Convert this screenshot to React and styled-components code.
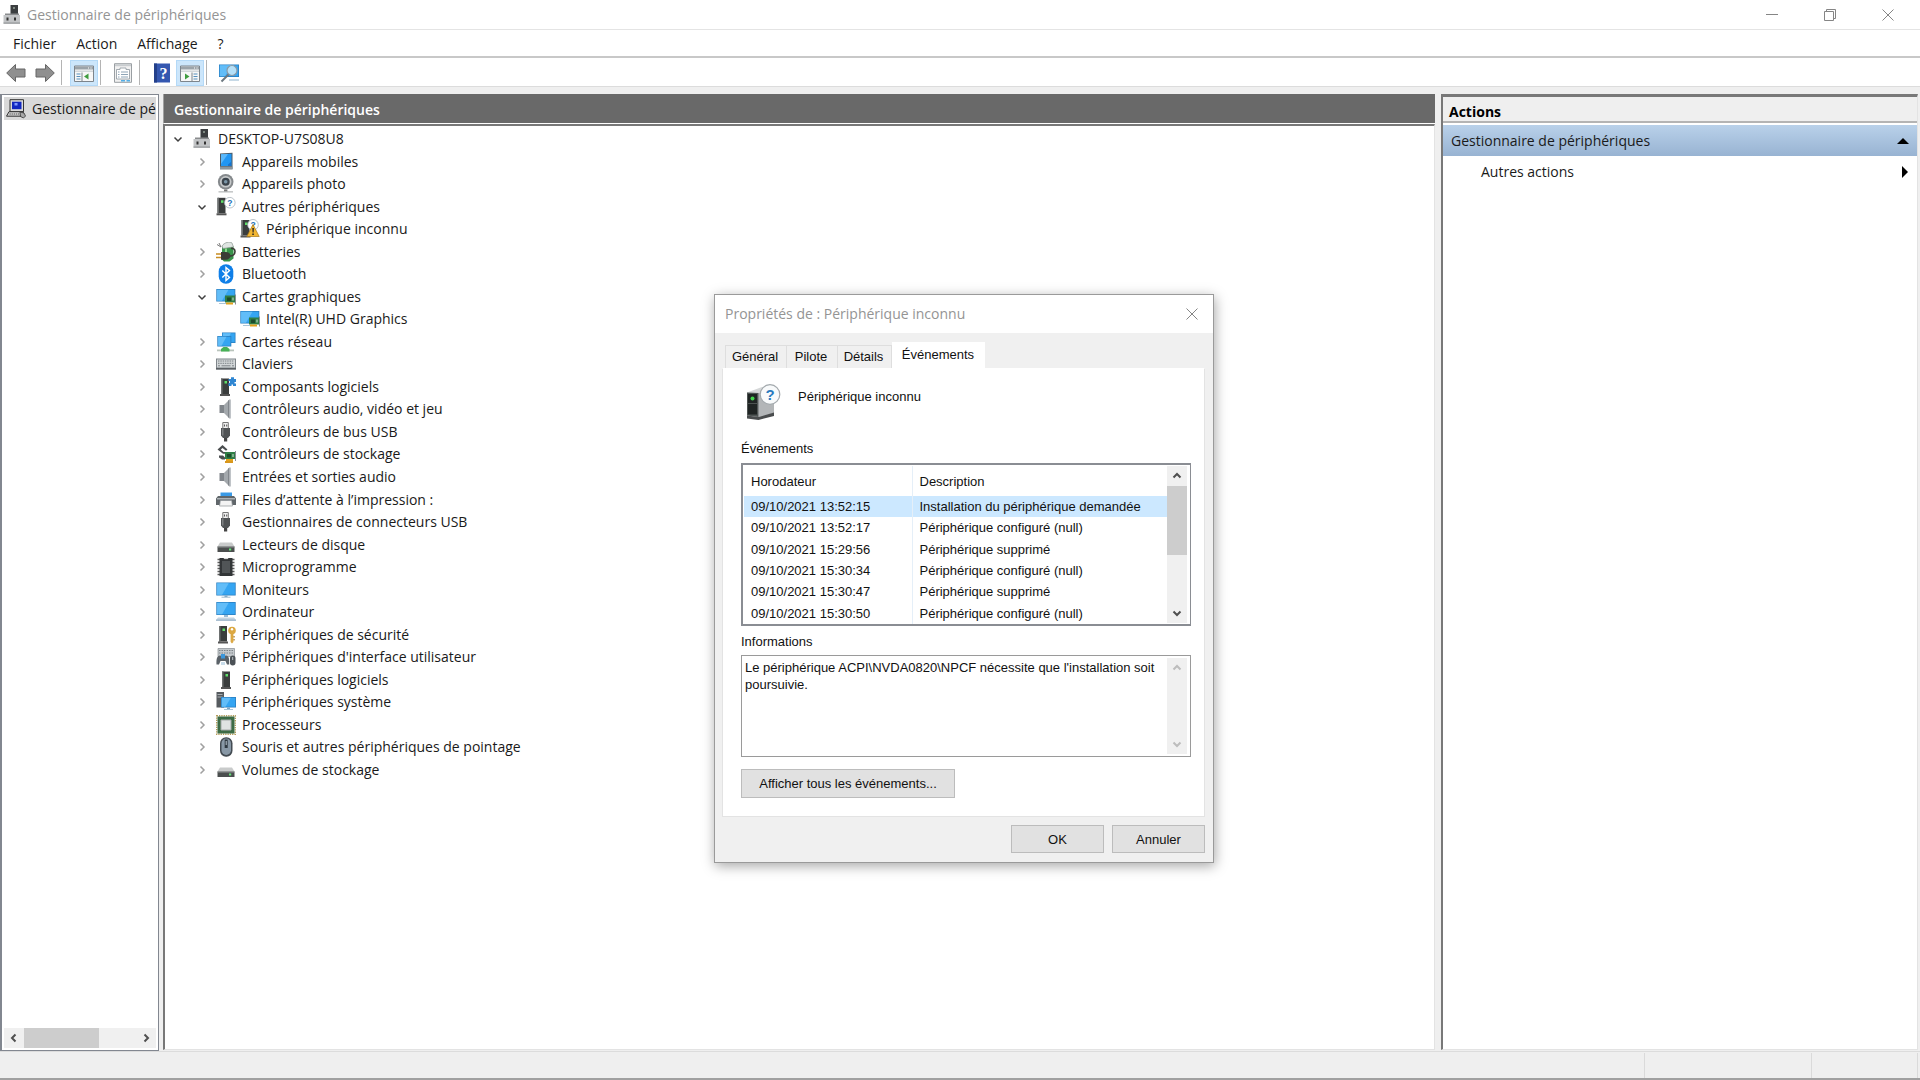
import React, { useState } from 'react'
import styled, { createGlobalStyle } from 'styled-components';

const GlobalStyle = createGlobalStyle`
* {
    box-sizing: border-box;
}
body {
    margin: 0;
    font-family: "Open Sans", "Noto Sans", sans-serif;
    font-size: 14px;
    line-height: 20px;
    color: #1a1a1a;
    background: #efefef;
}
button, textarea, table {
    font: inherit;
    color: inherit;
}
button {
    padding: 0;
    border: 0;
    background: none;
}
`;

/* ---------- main window ---------- */
const WindowStyle = styled.div`
    display: flex;
    flex-direction: column;
    min-height: 100vh;
    border-bottom: 2px solid #a0a0a0;
`;
const TitleBar = styled.header`
    display: flex;
    align-items: center;
    height: 30px;
    padding-left: 2px;
    background: #fff;
    border-bottom: 1px solid #e4e4e4;
`;
const TitleText = styled.h1`
    flex: 1;
    margin: 0 0 0 5px;
    font-size: 14px;
    font-weight: 400;
    color: #949494;
`;
const CaptionButton = styled.button`
    display: flex;
    align-items: center;
    justify-content: center;
    width: 58px;
    height: 28px;
`;
const CaptionGroup = styled.div`
    display: flex;
    padding-right: 3px;
`;
const MenuBar = styled.nav`
    display: flex;
    height: 28px;
    padding: 1px 3px 0;
    background: #fff;
    border-bottom: 2px solid #c8c8c8;
`;
const MenuButton = styled.button`
    padding: 0 10px;
`;
const ToolBar = styled.div`
    display: flex;
    align-items: center;
    height: 29px;
    padding: 1px 0 0 2px;
    background: #fff;
    border-bottom: 1px solid #dcdcdc;
`;
const ToolButton = styled.button`
    display: flex;
    align-items: center;
    justify-content: center;
    width: 28px;
    height: 26px;
    margin-left: ${props => props.$gap ? 1 : 0}px;
    background: ${props => props.$active ? '#cce6fb' : 'transparent'};
    border: 1px solid ${props => props.$active ? '#b4d9f7' : 'transparent'};
`;
const ToolSeparator = styled.span`
    width: 1px;
    height: 25px;
    margin: 0 8px 0 2px;
    background: #b4b4b4;
`;
const Workspace = styled.main`
    display: flex;
    flex: 1;
    padding: 7px 2px 0 0;
`;

/* ---------- left pane ---------- */
const ConsolePane = styled.aside`
    display: flex;
    flex-direction: column;
    width: 159px;
    margin-right: 4px;
    padding: 2px;
    background: #fff;
    border: 1px solid #828790;
    border-left-width: 2px;
`;
const ConsoleItem = styled.button`
    display: flex;
    align-items: center;
    gap: 6px;
    height: 23px;
    padding-left: 2px;
    background: #d9d9d9;
    overflow: hidden;
    white-space: nowrap;
`;

/* ---------- scroll bars ---------- */
const ScrollTrack = styled.div`
    display: flex;
    flex-direction: ${props => props.$vertical ? 'column' : 'row'};
    flex: none;
    ${props => props.$vertical ? 'width: 20px;' : 'height: 20px; margin-top: auto;'}
    background: #f0f0f0;
`;
const ScrollButton = styled.button`
    display: flex;
    align-items: center;
    justify-content: center;
    width: 20px;
    height: 20px;
    color: ${props => props.disabled ? '#bdbdbd' : '#505050'};
`;
const ScrollThumb = styled.span`
    ${props => props.$vertical ? 'height: 69px;' : 'width: 75px;'}
    background: #cdcdcd;
`;
const ScrollSpace = styled.span`
    flex: 1;
`;

/* ---------- middle pane ---------- */
const DevicePane = styled.section`
    display: flex;
    flex-direction: column;
    flex: 1;
    min-width: 0;
    margin-right: 6px;
`;
const PaneTitle = styled.h2`
    height: 30px;
    margin: 0;
    padding-left: 10px;
    font-size: 14px;
    line-height: 32px;
    font-weight: 600;
    color: #fff;
    background: #696969;
    border-left: 1px solid #a0a0a0;
    border-bottom: 1px solid #fff;
`;
const DeviceBox = styled.div`
    flex: 1;
    margin-bottom: 1px;
    padding: 2px 0 0 5px;
    background: #fff;
    border: 2px solid #787878;
    border-right: 1px solid #e3e3e3;
    border-bottom: 1px solid #e3e3e3;
`;
const Tree = styled.ul`
    display: grid;
    grid-auto-rows: 1fr;
    height: 653px;
    margin: 0;
    padding: 0;
    list-style: none;
`;
const TreeRow = styled.li`
    display: flex;
    align-items: center;
    padding-left: ${props => props.$level * 24}px;
`;
const Expander = styled.button`
    display: flex;
    align-items: center;
    justify-content: center;
    width: 16px;
    height: 16px;
    margin-right: 6px;
    visibility: ${props => props.$hidden ? 'hidden' : 'visible'};
    color: ${props => props.$open ? '#404040' : '#a0a0a0'};
`;
const TreeLabel = styled.span`
    margin-left: 6px;
    white-space: nowrap;
`;

/* ---------- right pane ---------- */
const ActionsPane = styled.aside`
    display: flex;
    flex-direction: column;
    width: 477px;
    margin-bottom: 1px;
    background: #fff;
    border: 2px solid #787878;
    border-top-width: 3px;
    border-right: 1px solid #e3e3e3;
    border-bottom: 1px solid #e3e3e3;
`;
const ActionsTitle = styled.h2`
    height: 26px;
    margin: 0 0 2px;
    padding-left: 6px;
    font-size: 14px;
    line-height: 29px;
    font-weight: 700;
    color: #000;
    background: #efefef;
    border-bottom: 2px solid #b4b4b4;
`;
const ActionButton = styled.button`
    display: flex;
    align-items: center;
    justify-content: space-between;
    height: 31px;
    padding: ${props => props.$group ? '0 8px' : '0 9px 0 38px'};
    background: ${props => props.$group ? 'linear-gradient(#b9d1ea, #98b3d2)' : 'none'};
`;
const StatusBar = styled.footer`
    display: flex;
    justify-content: flex-end;
    height: 27px;
    padding: 1px 2px 0 0;
    border-top: 1px solid #dcdcdc;
`;
const StatusCell = styled.span`
    width: ${props => props.$width}px;
    border-left: 1px solid #dadada;
`;

/* ---------- properties dialog ---------- */
const Dialog = styled.section`
    position: absolute;
    left: 714px;
    top: 294px;
    width: 500px;
    font-family: "Liberation Sans", Arial, sans-serif;
    font-size: 13px;
    line-height: 17px;
    color: #111;
    background: #f0f0f0;
    border: 1px solid #9a9a9a;
    box-shadow: 1px 3px 12px rgba(0, 0, 0, 0.35);
`;
const DialogTitle = styled.header`
    display: flex;
    align-items: center;
    justify-content: space-between;
    height: 38px;
    padding: 0 0 1px 10px;
    font-family: "Open Sans", "Noto Sans", sans-serif;
    color: #949494;
    background: #fff;
`;
const DialogHeading = styled.h2`
    margin: 0;
    font-size: 14px;
    font-weight: 400;
`;
const DialogClose = styled(CaptionButton)`
    width: 42px;
`;
const TabList = styled.div`
    display: flex;
    align-items: flex-end;
    padding: 9px 0 0 10px;
`;
const Tab = styled.button`
    width: ${props => props.$width}px;
    height: ${props => props.$selected ? 26 : 23}px;
    padding: 0 ${props => props.$selected ? '0 3px' : '2px 2px 0'};
    background: ${props => props.$selected ? '#fff' : '#f0f0f0'};
    border: 1px solid ${props => props.$selected ? '#fff' : '#dedede'};
    border-bottom: 0;
    border-left-width: ${props => props.$first ? 1 : 0}px;
`;
const TabPanel = styled.div`
    display: flex;
    flex-direction: column;
    height: 449px;
    margin: 0 8px 0 7px;
    padding: 15px 13px 17px 18px;
    background: #fff;
    border: 1px solid #e3e3e3;
    border-top-color: #fff;
`;
const DeviceHeader = styled.div`
    display: flex;
    gap: 16px;
    height: 56px;
    padding-left: 5px;
`;
const DeviceName = styled.span`
    padding-top: 4px;
`;
const FieldLabel = styled.label`
    display: block;
    margin-bottom: ${props => props.$below}px;
`;
const EventBox = styled.div`
    display: flex;
    height: 163px;
    margin-bottom: 7px;
    padding: 1px 3px 1px 1px;
    border: 2px solid #8a8d93;
    border-right-width: 1px;
`;
const EventTable = styled.table`
    flex: 1;
    height: 158px;
    border-collapse: collapse;
    text-align: left;
`;
const EventHead = styled.th`
    width: ${props => props.$width};
    height: 30px;
    padding: 0 0 0 7px;
    font-weight: 400;
    border-right: 1px solid #e5eff8;
    &:last-child {
        border-right: 0;
    }
`;
const EventRow = styled.tr`
    background: ${props => props.$selected ? '#cce8ff' : 'transparent'};
`;
const EventCell = styled.td`
    padding: 0 0 0 7px;
    white-space: nowrap;
    border-right: 1px solid #e5eff8;
    &:last-child {
        border-right: 0;
    }
`;
const InfoBox = styled.div`
    display: flex;
    height: 102px;
    margin-bottom: 12px;
    padding: 2px 3px 2px 2px;
    border: 1px solid #9a9a9a;
`;
const InfoText = styled.textarea`
    flex: 1;
    min-width: 0;
    padding: 1px 0 0 1px;
    border: 0;
    outline: none;
    resize: none;
    overflow: hidden;
`;
const DialogButton = styled.button`
    width: ${props => props.$wide ? 214 : 93}px;
    height: ${props => props.$wide ? 29 : 28}px;
    background: #e1e1e1;
    border: 1px solid #bcbcbc;
`;
const DialogFooter = styled.footer`
    display: flex;
    justify-content: flex-end;
    gap: 8px;
    padding: 8px 8px 9px 0;
`;

/* ---------- icons ---------- */
const Drawing = styled.svg`
    flex: none;
`;
const Svg = ({ size = 20, box = 20, children }) => (
    <Drawing width={size} height={size} viewBox={`0 0 ${box} ${box}`} fill="none" aria-hidden="true">{children}</Drawing>
)

const chevrons = {
    up: 'M1.5 6.5 5 3l3.5 3.5',
    down: 'M1.5 3.5 5 7l3.5-3.5',
    left: 'M6.5 1.5 3 5l3.5 3.5',
    right: 'M3.5 1.5 7 5 3.5 8.5',
}
const Chevron = ({ to, width = 1.5 }) => (
    <Svg size={10} box={10}><path d={chevrons[to]} stroke="currentColor" strokeWidth={width} /></Svg>
)

const Tower = ({ x = 0, y = 0 }) => (
    <g transform={`translate(${x} ${y})`}>
        <path d="M1 .5h8V16H1z" fill="#3a3d3d" />
        <path d="M1 .5h1.500V16H1z" fill="#6d7070" />
        <path d="M0 16h10v2H0z" fill="#555" />
        <path d="M4.500 3h2.500v2.500H4.500z" fill="#5fe06a" />
    </g>
)
const Screen = ({ x, y, w, h }) => (
    <g>
        <rect x={x} y={y} width={w} height={h} fill="#2b7fc0" />
        <rect x={x + 0.8} y={y + 0.8} width={w - 1.6} height={h - 1.6} fill="#35a5f2" />
        <path d={`M${x + 0.8} ${y + 0.8}h${w * 0.6}L${x + w * 0.3} ${y + h - 0.8}H${x + 0.8}z`} fill="#62bdf8" />
    </g>
)
const Card = ({ x, y }) => (
    <g transform={`translate(${x} ${y})`}>
        <path d="M1 1h10v7H1z" fill="#2f7d46" />
        <path d="M3 3h4v3.500H3z" fill="#1d4c2c" />
        <path d="M8 3h2v3H8z" fill="#7fb08c" />
        <path d="M2 8h7v2H2z" fill="#e3a21c" />
        <path d="M11 0h1v10h-1z" fill="#8a8f94" />
    </g>
)
const Bubble = ({ x, y }) => (
    <g>
        <circle cx={x} cy={y} r="5.300" fill="#fff" stroke="#a9b4bd" strokeWidth=".8" />
        <text x={x} y={y + 3} textAnchor="middle" fontSize="8.500" fontWeight="700" fontFamily="Liberation Sans" fill="#2470b8">?</text>
    </g>
)
const UsbPlug = () => (
    <g>
        <path d="M6.800 .5h5.500v6H6.800z" fill="#f0f0f0" stroke="#777" />
        <path d="M8 2.500h1v2H8zM10.200 2.500h1v2h-1z" fill="#555" />
        <path d="M5 6h9v7.500l-2 2.500H7l-2-2.500z" fill="#505355" />
        <path d="M6 6.500h1.500v7H6z" fill="#7d8082" />
        <path d="M8 16h3.200v3.500H8z" fill="#444" />
    </g>
)
const Speaker = () => (
    <g>
        <path d="M3.500 6h4.500v8H3.500z" fill="#80858a" />
        <path d="M8 6 13.500.5v19L8 14z" fill="#a3a8ac" />
        <path d="M12.500 1.500 13.500.5v19l-1-1z" fill="#62676c" />
        <path d="M13.500.5h1.500v19h-1.500z" fill="#c0c4c8" />
    </g>
)
const Drive = () => (
    <g>
        <path d="M4 7.500h12l2.500 4H1.500z" fill="#c9cbcb" />
        <path d="M1.500 11.500h17V17h-17z" fill="#4b4e4e" />
        <path d="M1.500 11.500h17v1h-17z" fill="#8d9090" />
        <path d="M13 13.500h2.200v2H13z" fill="#67e27b" />
    </g>
)

const icons = {
    computer: (
        <g>
            <path d="M8.500 0H16v10H8.500z" fill="#3b3e40" />
            <path d="M11 2h2v2h-2z" fill="#7f8a82" />
            <path d="M3 8.500h14v2H3z" fill="#8a8c8e" />
            <path d="M1.500 10h16.500v8.500H1.500z" fill="#c2c4c6" />
            <path d="M1.500 17.500h16.500v1.200H1.500z" fill="#919496" />
            <path d="M4.500 12.500h2v3h-2zM12 12.500h2v3h-2z" fill="#333" />
        </g>
    ),
    mobile: (
        <g>
            <path d="m4 1.500 12.500-.8v16.600H4z" fill="#4c5963" />
            <path d="m5 2.300 10.500-.6V14H5z" fill="#2196f3" />
            <path d="m5 2.300 7-.4L5 12z" fill="#5bb8fa" />
            <path d="M4 14.500h12.500v2.800H4z" fill="#8c969d" />
            <path d="M12 12.500 15 10v4h-3z" fill="#1674cf" />
        </g>
    ),
    camera: (
        <g>
            <circle cx="9.700" cy="7.800" r="7.800" fill="#85898c" />
            <circle cx="9.700" cy="7.800" r="5.800" fill="#c6c9ca" />
            <circle cx="9.700" cy="7.800" r="4" fill="#3b444c" />
            <circle cx="9.700" cy="7.800" r="1.800" fill="#7b96a8" />
            <path d="M8 15.500h3.400V18H8z" fill="#777" />
            <path d="M2.500 17.200h14.500v1.300H2.500z" fill="#b9bcbd" />
        </g>
    ),
    other: (
        <g><Tower x={0.5} y={0.3} /><Bubble x={13.8} y={5.7} /></g>
    ),
    unknown: (
        <g>
            <Tower x={0.5} y={0.5} />
            <Bubble x={13} y={5.8} />
            <path d="M13 5.500 19.200 17.500H6.800z" fill="#f2b632" stroke="#a8791a" strokeWidth=".7" />
            <path d="M12.300 9h1.600l-.3 4.600h-1zM12.300 14.500h1.500V16h-1.500z" fill="#222" />
        </g>
    ),
    battery: (
        <g>
            <path d="M6 4.500h11.500v12l-4 3H8l-2-2z" fill="#38934a" />
            <path d="M6 4C8 .5 14-1 16 1l1.500 4L7 6.500z" fill="#dfe5e2" stroke="#8b9690" strokeWidth=".7" />
            <path d="M9 6.500h2v4H9z" fill="#8bd68d" />
            <path d="M0 12h6M0 15.500h6" stroke="#c78d23" strokeWidth="1.500" />
            <path d="M5 10h4.500c3 0 5 1.700 5 3.700s-2 4-5 4H5z" fill="#3b3b36" />
            <path d="M14 14c3 0 5-2 5-4.500s-2-3.500-4-3" stroke="#3b3b36" strokeWidth="1.600" />
            <path d="M1 2.500 5 5M3 1l2 4" stroke="#777" />
        </g>
    ),
    bluetooth: (
        <g>
            <rect x="2.700" y=".2" width="14.600" height="19.600" rx="7.300" fill="#0f7fe8" />
            <path d="m6.300 6.500 7.200 7-3.500 3V3.500l3.500 3-7.200 7" stroke="#fff" strokeWidth="1.400" />
        </g>
    ),
    graphics: (
        <g>
            <Screen x={0.3} y={2} w={19} h={12.500} />
            <Card x={8} y={7.500} />
            <path d="M3 16h7v1H3z" fill="#a9c4d8" />
        </g>
    ),
    network: (
        <g>
            <Screen x={6} y={0.500} w={13.500} h={10.500} />
            <Screen x={1.300} y={4} w={14} h={10.500} />
            <path d="M1 17.500h17v1.800H1z" fill="#b9c4bc" />
            <path d="M5 19.500v-2.500L7.500 15H11l2.500 2v2.500z" fill="#46b156" />
        </g>
    ),
    keyboard: (
        <g>
            <path d="M0 4.500h20v11H0z" fill="#7f858a" />
            <path d="M1 5.500h18v8H1z" fill="#d3d7d9" />
            <path d="M2 7h16M2 9.300h16" stroke="#7c8286" strokeDasharray="1.500 .8" />
            <path d="M2 11.800h2M5.500 11.800h9M16 11.800h2" stroke="#7c8286" />
            <path d="M0 14h20v1.500H0z" fill="#5c6165" />
        </g>
    ),
    component: (
        <g>
            <Tower x={4} y={1} />
            <path d="M12.500 2H15V.3h3V2h2v3h-1.500v1.500H20V9h-3V7.500h-1.500V9h-3V6h1.300V4h-1.300z" fill="#2f86d2" />
        </g>
    ),
    audio: <Speaker />,
    usb: <UsbPlug />,
    storage: (
        <g>
            <path d="m1.500 5.500 5-4.500 5 4.500-1.500 1.300L6.500 4 4.800 5.500 7.500 8H10v1.800H7z" fill="#4a4d4f" />
            <path d="M3 11.500h4l2 2v2H6l-3-2z" fill="#4a4d4f" />
            <Card x={8} y={7} />
            <path d="M9 17h8v2H9z" fill="#d8971d" />
        </g>
    ),
    printer: (
        <g>
            <path d="M4.500 2.500h11.500v4H4.500z" fill="#3a9ae6" />
            <path d="M2 6h16l2 2.500V15h-4v-4H4v4H0V8.500z" fill="#60666a" />
            <path d="M1 8h18v1.500H1z" fill="#adb3b7" />
            <path d="M4.500 10.500h11l1 5.500h-13z" fill="#f4f4f4" stroke="#8c9296" strokeWidth=".7" />
        </g>
    ),
    drive: <Drive />,
    chip: (
        <g>
            <path d="M1.500 2.500h17M1.500 5.500h17M1.500 8.500h17M1.500 11.500h17M1.500 14.500h17M1.500 17.500h17" stroke="#5d5d5d" strokeWidth="1.300" />
            <path d="M3.500 1h4l1 1.500h3l1-1.500h4v18h-13z" fill="#333638" />
            <path d="M6 4h8v12H6z" fill="#515557" />
        </g>
    ),
    monitor: (
        <g>
            <Screen x={0.3} y={2.500} w={19.400} h={13} />
            <path d="M8.500 15.500h3V17h-3z" fill="#7da7c6" />
            <path d="M5.500 16.700h9v1h-9z" fill="#9db8cc" />
        </g>
    ),
    desktop: (
        <g>
            <Screen x={0.3} y={0} w={19.400} h={13} />
            <path d="M8 13h4v2H8z" fill="#9dbdd6" />
            <path d="M2 15.500h16l2 2.500H0z" fill="#c3d4e2" />
            <path d="M0 17.700h20v1H0z" fill="#86a5bf" />
        </g>
    ),
    security: (
        <g>
            <Tower x={2} y={0.500} />
            <circle cx="16" cy="5.500" r="3.800" fill="#dca842" />
            <circle cx="16" cy="4.200" r="1.200" fill="#fff" />
            <path d="M14.600 8.500h2.800V17L16 18.500 14.600 17z" fill="#dca842" />
            <path d="M17.400 11h1.300v1.500h-1.300zM17.400 14h1.300v1.500h-1.300z" fill="#b3812a" />
        </g>
    ),
    hid: (
        <g>
            <path d="M2 1.500h16.500v8H2z" fill="#c4c9cd" stroke="#868c91" strokeWidth=".7" />
            <path d="M3 3.500h14M3 6h14" stroke="#7c8286" strokeDasharray="1.500 1" />
            <path d="M.5 17.500C.2 12 1 8.500 4 8.500c1.500 0 2 1 3 1s1.500-1 3-1c3 0 3.500 3.500 3.200 9H11L9.500 14h-5L3 17.500z" fill="#5b6268" />
            <path d="M5 7h4v4.500H5z" fill="#3c97db" />
            <path d="M5 15h4v3H5z" fill="#c8dcea" />
            <rect x="14" y="8.500" width="5.500" height="10" rx="2.700" fill="#4b5156" />
            <path d="M16.700 10v3" stroke="#b9c0c5" />
        </g>
    ),
    software: <Tower x={5} y={1} />,
    system: (
        <g>
            <path d="M.5 0h7.500v15.500H.5z" fill="#565b5f" />
            <path d="M1.500 2.500h5M1.500 5h5" stroke="#a8adb1" />
            <Screen x={5} y={5} w={15} h={10.500} />
            <path d="M11 15.500h3v2h-3z" fill="#7da7c6" />
            <path d="M8 17h9v1H8z" fill="#a9c4d8" />
        </g>
    ),
    cpu: (
        <g>
            <path d="M.7.700h18.600v18.600H.7z" stroke="#b39c59" strokeWidth="1.400" strokeDasharray="1.300 1" />
            <path d="M1.500 1.500h17v17h-17z" fill="#3c6b45" />
            <path d="M5 5h10v10H5z" fill="#dfe2e2" stroke="#a6aaaa" />
        </g>
    ),
    mouse: (
        <g>
            <rect x="4" y=".2" width="12.500" height="19.600" rx="6" fill="#434b52" />
            <rect x="5.500" y="1.500" width="9.500" height="16.500" rx="4.700" fill="#8898a6" />
            <path d="M8.700 2.500h3v8.500h-3z" fill="#303a42" />
            <path d="M10.200 4v4" stroke="#b7c4cf" />
        </g>
    ),
    console: (
        <g>
            <path d="M4 .7h13.500v12H4z" fill="#dadada" stroke="#333" />
            <path d="M6 2.700h9.500v7.500H6z" fill="#1026c0" />
            <path d="M8.500 4h3v2.500h-3z" fill="#7d96ff" />
            <path d="m3 12.700-2.500 4.500h15.500l1.500-4.500z" fill="#d0d0d0" stroke="#333" />
            <path d="M3.500 15h10" stroke="#555" strokeDasharray="1.300 .8" />
            <path d="m14 13 4 1 1.500 3-2 2-3-1.500z" fill="#a8a8a8" stroke="#333" strokeWidth=".8" />
        </g>
    ),
    back: <path d="M9.500 1.500.7 10l8.800 8.500V14H19V6H9.500z" fill="#8f8f8f" stroke="#666" />,
    forward: <path d="M10.500 1.500 19.300 10l-8.800 8.500V14H1V6h9.500z" fill="#8f8f8f" stroke="#666" />,
    treePane: (
        <g>
            <path d="M.5 3h19v15.500H.5z" fill="#f7f7f7" stroke="#7d858c" />
            <path d="M1 3.500h18v3H1z" fill="#9ba3a9" />
            <path d="M14 5h1M16.500 5h1" stroke="#fff" />
            <path d="M1 7.500h18V9H1z" fill="#d2d7db" />
            <path d="M2.500 11h4M2.500 13.500h4M2.500 16h4" stroke="#5790bd" strokeWidth="1.200" />
            <path d="M8 9.500v9" stroke="#7d858c" />
            <path d="M14.500 10.500v6l-4.500-3z" fill="#3f9c3f" />
        </g>
    ),
    properties: (
        <g>
            <path d="M1.500.7h17v18.600h-17z" fill="#f1f1f1" stroke="#9a9fa3" />
            <path d="M2 1.200h16v2H2z" fill="#c9cdd0" />
            <path d="M3.500 6.500h3.500V5H13v1.500h3.500v9.500h-13z" fill="#fff" stroke="#8e979e" strokeWidth=".8" />
            <path d="M5 9h1.500M8 9h7M5 11.500h1.500M8 11.500h7M5 14h1.500M8 14h7" stroke="#8fa5b7" />
            <path d="M8 17h4v1.500H8zM13.500 17h3.500v1.500h-3.500z" fill="#53aee6" />
        </g>
    ),
    help: (
        <g>
            <path d="M2 .5h16v19H2z" fill="#3457b0" />
            <path d="M2 .5h3v19H2z" fill="#24408a" />
            <text x="11.500" y="15.500" textAnchor="middle" fontSize="16" fontWeight="700" fontFamily="Liberation Serif" fill="#fff">?</text>
        </g>
    ),
    actionPane: (
        <g>
            <path d="M.5 3h19v15.500H.5z" fill="#f7f7f7" stroke="#7d858c" />
            <path d="M1 3.500h18v3H1z" fill="#9ba3a9" />
            <path d="M14 5h1M16.500 5h1" stroke="#fff" />
            <path d="M1 7.500h18V9H1z" fill="#d2d7db" />
            <path d="M13.500 11h4M13.500 13.500h4M13.500 16h4" stroke="#5790bd" strokeWidth="1.200" />
            <path d="M12 9.500v9" stroke="#7d858c" />
            <path d="M5 10.500v6l4.500-3z" fill="#3f9c3f" />
        </g>
    ),
    scan: (
        <g>
            <Screen x={0} y={1.500} w={20} h={12.500} />
            <path d="M10 16.500h10v1H10z" fill="#8fb3cd" />
            <circle cx="13" cy="7.500" r="5" fill="#b5e0f8" stroke="#8a9aa6" strokeWidth="1.200" />
            <path d="m9.500 11.500-7 7" stroke="#6c7880" strokeWidth="2" />
        </g>
    ),
}

const BigDeviceIcon = () => (
    <Svg size={36} box={36}>
        <path d="M1 8.500 16 3l12 4v22l-15.500 5L1 33z" fill="#d5d7d8" />
        <path d="M12.500 9 28 8v21l-15.500 4z" fill="#b3b6b8" />
        <path d="M1 8.500 12.500 9v24L1 31.500z" fill="#4d5352" />
        <path d="M2 10h9v9H2zM2 20h9v10.500H2z" fill="#1f2423" />
        <path d="M1 31.500 12.500 33 28 28.500V32l-15.500 4L1 34.500z" fill="#4a4d4e" />
        <circle cx="6.500" cy="14.500" r="2" fill="#43d54c" />
        <circle cx="24" cy="10.500" r="9.800" fill="#f8fafb" stroke="#a3a9ad" strokeWidth="1.200" />
        <text x="24" y="16" textAnchor="middle" fontSize="15" fontWeight="700" fontFamily="Liberation Sans" fill="#2a7abf">?</text>
    </Svg>
)
const CloseIcon = () => (
    <Svg size={12} box={12}><path d="m.5.500 11 11M11.500.5l-11 11" stroke="#858585" /></Svg>
)

/* ---------- data ---------- */
// level, icon, label, state of the node
const devices = [
    [0, 'computer', 'DESKTOP-U7S08U8', 'open'],
    [1, 'mobile', 'Appareils mobiles', 'closed'],
    [1, 'camera', 'Appareils photo', 'closed'],
    [1, 'other', 'Autres périphériques', 'open'],
    [2, 'unknown', 'Périphérique inconnu', 'leaf'],
    [1, 'battery', 'Batteries', 'closed'],
    [1, 'bluetooth', 'Bluetooth', 'closed'],
    [1, 'graphics', 'Cartes graphiques', 'open'],
    [2, 'graphics', 'Intel(R) UHD Graphics', 'leaf'],
    [1, 'network', 'Cartes réseau', 'closed'],
    [1, 'keyboard', 'Claviers', 'closed'],
    [1, 'component', 'Composants logiciels', 'closed'],
    [1, 'audio', 'Contrôleurs audio, vidéo et jeu', 'closed'],
    [1, 'usb', 'Contrôleurs de bus USB', 'closed'],
    [1, 'storage', 'Contrôleurs de stockage', 'closed'],
    [1, 'audio', 'Entrées et sorties audio', 'closed'],
    [1, 'printer', 'Files d’attente à l’impression :', 'closed'],
    [1, 'usb', 'Gestionnaires de connecteurs USB', 'closed'],
    [1, 'drive', 'Lecteurs de disque', 'closed'],
    [1, 'chip', 'Microprogramme', 'closed'],
    [1, 'monitor', 'Moniteurs', 'closed'],
    [1, 'desktop', 'Ordinateur', 'closed'],
    [1, 'security', 'Périphériques de sécurité', 'closed'],
    [1, 'hid', "Périphériques d'interface utilisateur", 'closed'],
    [1, 'software', 'Périphériques logiciels', 'closed'],
    [1, 'system', 'Périphériques système', 'closed'],
    [1, 'cpu', 'Processeurs', 'closed'],
    [1, 'mouse', 'Souris et autres périphériques de pointage', 'closed'],
    [1, 'drive', 'Volumes de stockage', 'closed'],
];

const events = [
    ['09/10/2021 13:52:15', 'Installation du périphérique demandée'],
    ['09/10/2021 13:52:17', 'Périphérique configuré (null)'],
    ['09/10/2021 15:29:56', 'Périphérique supprimé'],
    ['09/10/2021 15:30:34', 'Périphérique configuré (null)'],
    ['09/10/2021 15:30:47', 'Périphérique supprimé'],
    ['09/10/2021 15:30:50', 'Périphérique configuré (null)'],
];

const tabs = [['Général', 62], ['Pilote', 51], ['Détails', 54], ['Événements', 93]];

function Scrollbar({ vertical, disabled }) {
    return (
        <ScrollTrack $vertical={vertical}>
            <ScrollButton disabled={disabled} aria-label="Précédent"><Chevron to={vertical ? 'up' : 'left'} width={2} /></ScrollButton>
            {!disabled && <ScrollThumb $vertical={vertical} />}
            <ScrollSpace />
            <ScrollButton disabled={disabled} aria-label="Suivant"><Chevron to={vertical ? 'down' : 'right'} width={2} /></ScrollButton>
        </ScrollTrack>
    )
}

function DeviceTree() {
    return (
        <Tree>
            {devices.map(([level, icon, label, state]) => (
                <TreeRow key={label} $level={level}>
                    <Expander $open={state === 'open'} $hidden={state === 'leaf'} aria-label={label}>
                        <Chevron to={state === 'open' ? 'down' : 'right'} />
                    </Expander>
                    <Svg>{icons[icon]}</Svg>
                    <TreeLabel>{label}</TreeLabel>
                </TreeRow>
            ))}
        </Tree>
    )
}

function PropertiesDialog() {
    const [selected, setSelected] = useState(0);

    return (
        <Dialog role="dialog" aria-labelledby="dialog-title">
            <DialogTitle>
                <DialogHeading id="dialog-title">Propriétés de : Périphérique inconnu</DialogHeading>
                <DialogClose aria-label="Fermer"><CloseIcon /></DialogClose>
            </DialogTitle>
            <TabList role="tablist">
                {tabs.map(([name, width], i) => (
                    <Tab key={name} role="tab" aria-selected={i === 3} $width={width} $first={i === 0} $selected={i === 3}>{name}</Tab>
                ))}
            </TabList>
            <TabPanel role="tabpanel">
                <DeviceHeader>
                    <BigDeviceIcon />
                    <DeviceName>Périphérique inconnu</DeviceName>
                </DeviceHeader>
                <FieldLabel as="span" id="events-label" $below={6}>Événements</FieldLabel>
                <EventBox>
                    <EventTable aria-labelledby="events-label">
                        <thead>
                            <tr>
                                <EventHead $width="168px">Horodateur</EventHead>
                                <EventHead $width="auto">Description</EventHead>
                            </tr>
                        </thead>
                        <tbody>
                            {events.map(([date, text], i) => (
                                <EventRow key={date} $selected={i === selected} onClick={() => setSelected(i)}>
                                    <EventCell>{date}</EventCell>
                                    <EventCell>{text}</EventCell>
                                </EventRow>
                            ))}
                        </tbody>
                    </EventTable>
                    <Scrollbar vertical />
                </EventBox>
                <FieldLabel htmlFor="info" $below={5}>Informations</FieldLabel>
                <InfoBox>
                    <InfoText id="info" readOnly value={"Le périphérique ACPI\\NVDA0820\\NPCF nécessite que l'installation soit poursuivie."} />
                    <Scrollbar vertical disabled />
                </InfoBox>
                <DialogButton $wide>Afficher tous les événements...</DialogButton>
            </TabPanel>
            <DialogFooter>
                <DialogButton>OK</DialogButton>
                <DialogButton>Annuler</DialogButton>
            </DialogFooter>
        </Dialog>
    )
}

function App() {
    return (
        <WindowStyle>
            <GlobalStyle />
            <TitleBar>
                <Svg>{icons.computer}</Svg>
                <TitleText>Gestionnaire de périphériques</TitleText>
                <CaptionGroup>
                    <CaptionButton aria-label="Réduire">
                        <Svg size={12} box={12}><path d="M0 5.500h12" stroke="#858585" /></Svg>
                    </CaptionButton>
                    <CaptionButton aria-label="Restaurer">
                        <Svg size={12} box={12}><path d="M.5 2.500h9v9h-9zM2.500 2.500v-2h9v9h-2" stroke="#858585" /></Svg>
                    </CaptionButton>
                    <CaptionButton aria-label="Fermer"><CloseIcon /></CaptionButton>
                </CaptionGroup>
            </TitleBar>
            <MenuBar>
                {['Fichier', 'Action', 'Affichage', '?'].map(name => (
                    <MenuButton key={name}>{name}</MenuButton>
                ))}
            </MenuBar>
            <ToolBar>
                <ToolButton aria-label="Page précédente"><Svg>{icons.back}</Svg></ToolButton>
                <ToolButton $gap aria-label="Page suivante"><Svg>{icons.forward}</Svg></ToolButton>
                <ToolSeparator />
                <ToolButton $active aria-label="Arborescence"><Svg>{icons.treePane}</Svg></ToolButton>
                <ToolSeparator />
                <ToolButton aria-label="Propriétés"><Svg>{icons.properties}</Svg></ToolButton>
                <ToolSeparator />
                <ToolButton aria-label="Aide"><Svg>{icons.help}</Svg></ToolButton>
                <ToolButton $active aria-label="Volet Actions"><Svg>{icons.actionPane}</Svg></ToolButton>
                <ToolSeparator />
                <ToolButton aria-label="Rechercher les modifications"><Svg>{icons.scan}</Svg></ToolButton>
            </ToolBar>
            <Workspace>
                <ConsolePane>
                    <ConsoleItem><Svg>{icons.console}</Svg>Gestionnaire de pé</ConsoleItem>
                    <Scrollbar />
                </ConsolePane>
                <DevicePane>
                    <PaneTitle>Gestionnaire de périphériques</PaneTitle>
                    <DeviceBox>
                        <DeviceTree />
                    </DeviceBox>
                </DevicePane>
                <ActionsPane>
                    <ActionsTitle>Actions</ActionsTitle>
                    <ActionButton $group>
                        Gestionnaire de périphériques
                        <Svg size={12} box={12}><path d="M0 9 6 3l6 6z" fill="#000" /></Svg>
                    </ActionButton>
                    <ActionButton>
                        Autres actions
                        <Svg size={12} box={12}><path d="M6 0v12l6-6z" fill="#000" /></Svg>
                    </ActionButton>
                </ActionsPane>
            </Workspace>
            <StatusBar>
                <StatusCell $width={167} />
                <StatusCell $width={106} />
                <StatusCell $width={1} />
            </StatusBar>
            {/* floats over the console */}
            <PropertiesDialog />
        </WindowStyle>
    )
}

export default App
